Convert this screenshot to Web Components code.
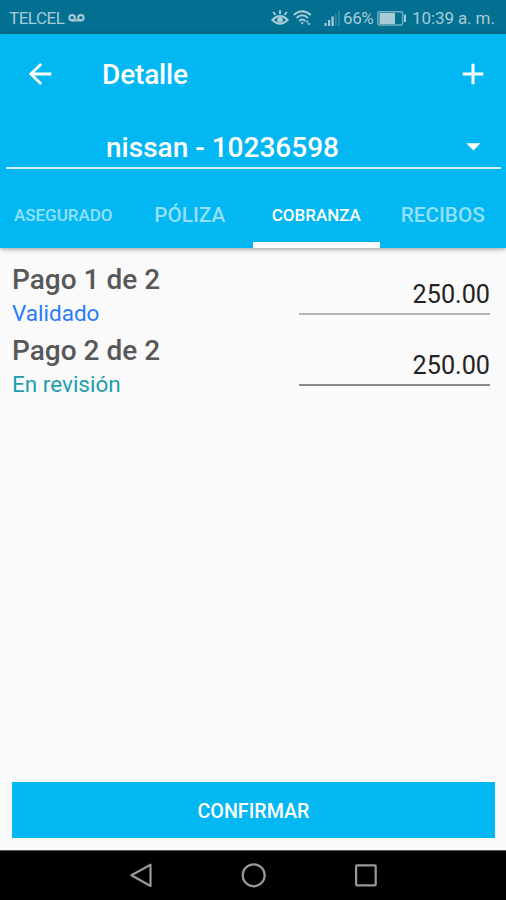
<!DOCTYPE html>
<html lang="es">
<head>
<meta charset="utf-8">
<meta name="viewport" content="width=device-width, initial-scale=1">
<title>Detalle</title>
<style>
  :root {
    --color-primary: #03b7f3;
    --color-primary-dark: #037092;
    --color-surface: #fafafa;
  }
  body {
    margin: 0;
    font-family: Roboto, "Liberation Sans", sans-serif;
    background-color: var(--color-surface);
  }
</style>
</head>
<body>
<detail-page></detail-page>

<script>
class BaseElement extends HTMLElement {
  constructor() {
    super();
    const template = document.createElement('template');
    template.innerHTML = this.constructor.markup;
    this.attachShadow({mode: 'open'});
    this.shadowRoot.appendChild(template.content.cloneNode(true));
  }
}

class StatusBar extends BaseElement {
  static markup = `
    <style>
      :host {
        box-sizing: border-box;
        display: flex;
        align-items: center;
        height: 34px;
        padding: 2px 10px 0 9px;
        background-color: var(--color-primary-dark);
        color: #a6cbd7;
        font-size: 17px;
        line-height: 20px;
        white-space: nowrap;
      }
      svg {
        display: block;
        flex: none;
      }
      .carrier { width: 56px; letter-spacing: -0.5px; }
      .voicemail { margin: 0 0 1px 3px; }
      .spacer { flex: 1; }
      .battery-level { width: 31px; margin: 0 3px 0 2px; letter-spacing: -0.4px; }
      .time { width: 84px; margin-left: 5px; letter-spacing: -0.1px; }
      .wifi { margin: 0 12px 0 4px; }
    </style>
    <span class="carrier">TELCEL</span>
    <svg class="voicemail" width="17" height="10" viewBox="0 0 17 10" fill="none" stroke="currentColor" stroke-width="2.1">
      <circle cx="4.1" cy="4.7" r="2.7"/><circle cx="12.9" cy="4.7" r="2.7"/><path d="M4 7.4h9"/>
    </svg>
    <span class="spacer"></span>
    <svg width="18" height="18" viewBox="0 0 18 18" fill="none" stroke="currentColor" stroke-width="2">
      <path d="M1.4 11Q9 3.2 16.6 11Q9 18.4 1.4 11ZM9 5V1.2M4.5 6L2.2 3M13.5 6l2.3-3"/>
      <circle cx="9" cy="10.8" r="2.9" fill="currentColor" stroke="none"/>
    </svg>
    <svg class="wifi" width="19" height="18" viewBox="0 0 19 18" fill="none" stroke="currentColor" stroke-width="2">
      <path d="M.8 6Q9.2-1.6 17.8 6M3.6 9Q9.2 3.6 15 9M6.3 12Q9.2 9 12.2 12"/>
      <path d="M7.5 13.3h3.4l-1.7 2.5zM12.3 13.2l2-2.2 1.6 2.2zM14 14.3h3.8l-1.9 2.2z" fill="currentColor" stroke="none"/>
    </svg>
    <svg width="17" height="17" viewBox="0 0 17 17" fill="currentColor">
      <path d="M.5 13h2.2v3H.5zM4 10h2.2v6H4zM7.5 6.5h2.2V16H7.5z"/>
      <path d="M11 3.5h1.6V16H11zM14 .5h1.8V16H14z" opacity=".28"/>
    </svg>
    <span class="battery-level">66%</span>
    <svg width="30" height="15" viewBox="0 0 30 15">
      <rect x=".8" y=".8" width="24.8" height="13.2" rx="1.5" fill="none" stroke="currentColor" stroke-width="1.4" opacity=".7"/>
      <path d="M2.5 2h15.5v11H2.5z" fill="currentColor"/>
      <path d="M27 3.5h2v7.5h-2z" fill="currentColor"/>
    </svg>
    <span class="time">10:39 a. m.</span>
  `;
}

class AppBar extends BaseElement {
  static markup = `
    <style>
      :host {
        box-sizing: border-box;
        display: flex;
        align-items: center;
        height: 79px;
        padding: 0 21px 0 28px;
        color: #fff;
      }
      .title {
        flex: 1;
        margin: 3px 0 0 50px;
        font-size: 28px;
        font-weight: 500;
        line-height: 34px;
        letter-spacing: -0.15px;
      }
      svg { display: block; }
    </style>
    <svg width="24" height="24" viewBox="0 0 24 24" fill="none" stroke="currentColor" stroke-width="2.8">
      <path d="M23.3 12H3M13.2 2L2.8 12l10.4 10"/>
    </svg>
    <span class="title"><slot></slot></span>
    <svg width="24" height="24" viewBox="0 0 24 24" fill="none" stroke="currentColor" stroke-width="3">
      <path d="M12 1.7v20.6M1.7 12h20.6"/>
    </svg>
  `;
}

class PolicySelect extends BaseElement {
  static markup = `
    <style>
      :host {
        box-sizing: border-box;
        display: flex;
        align-items: center;
        height: 43px;
        margin: 13px 5px 0 6px;
        padding: 1px 20px 0 100px;
        border-bottom: 2px solid #d3f2fd;
        color: #fff;
        font-size: 28px;
        font-weight: 500;
        line-height: 34px;
      }
      .value { flex: 1; margin-top: 1px; white-space: nowrap; }
      svg { display: block; }
    </style>
    <span class="value"><slot></slot></span>
    <svg width="15" height="8" viewBox="0 0 15 8" fill="currentColor"><path d="M.3.3h14.2L7.4 7.6z"/></svg>
  `;
}

class TabItem extends BaseElement {
  static markup = `
    <style>
      :host {
        box-sizing: border-box;
        display: flex;
        flex: 1;
        align-items: center;
        justify-content: center;
        padding-top: 18px;
        border-bottom: 6px solid transparent;
        color: #93e0fb;
        font-size: 20.7px;
        font-weight: 500;
        white-space: nowrap;
      }
      :host([small]) { font-size: 17px; }
      :host([selected]) {
        border-color: #fff;
        color: #fff;
      }
    </style>
    <slot></slot>
  `;
}

class TabBar extends BaseElement {
  static markup = `
    <style>
      :host {
        display: flex;
        height: 79px;
      }
    </style>
    <slot></slot>
  `;
}

class PaymentRow extends BaseElement {
  static markup = `
    <style>
      :host {
        display: flex;
        justify-content: space-between;
        height: 71.3px;
      }
      .name {
        color: #585858;
        font-size: 28px;
        font-weight: 500;
        line-height: 36px;
      }
      .status {
        color: var(--status-color);
        font-size: 22.5px;
        line-height: 30px;
      }
      .amount {
        box-sizing: border-box;
        width: 191px;
        height: 53px;
        padding-top: 17px;
        border-bottom: 2px solid var(--line-color, #8a8a8a);
        color: #222;
        font-size: 25.2px;
        line-height: 32px;
        text-align: right;
      }
    </style>
    <div>
      <div class="name"><slot></slot></div>
      <div class="status"><slot name="status"></slot></div>
    </div>
    <div class="amount"><slot name="amount"></slot></div>
  `;
}

class ActionButton extends BaseElement {
  static markup = `
    <style>
      :host { display: block; }
      button {
        display: block;
        width: 100%;
        height: 56px;
        padding: 3px 0 0;
        border: none;
        background-color: var(--color-primary);
        color: #fff;
        font: 500 19.7px Roboto, "Liberation Sans", sans-serif;
      }
    </style>
    <button><slot></slot></button>
  `;
}

class NavigationBar extends BaseElement {
  static markup = `
    <style>
      :host {
        box-sizing: border-box;
        display: flex;
        justify-content: center;
        align-items: center;
        gap: 86px;
        height: 50px;
        padding-left: 2px;
        border-top: 1px solid #555;
        background-color: #000;
        color: #999;
      }
      svg { display: block; }
    </style>
    <svg width="26" height="26" viewBox="0 0 26 26" fill="none" stroke="currentColor" stroke-width="2.2" stroke-linejoin="round"><path d="M21.5 1.7v21.3L2.4 12.3z"/></svg>
    <svg width="26" height="26" viewBox="0 0 26 26" fill="none" stroke="currentColor" stroke-width="2.2"><circle cx="12.7" cy="12.3" r="11"/></svg>
    <svg width="26" height="26" viewBox="0 0 26 26" fill="none" stroke="currentColor" stroke-width="2.2"><rect x="3.1" y="2.4" width="19.6" height="20" rx="1"/></svg>
  `;
}

class DetailPage extends BaseElement {
  static markup = `
    <style>
      :host {
        display: flex;
        flex-direction: column;
        height: 900px;
      }
      header {
        height: 214px;
        background-color: var(--color-primary);
        box-shadow: 0 1px 5px rgba(0, 0, 0, 0.4);
      }
      main {
        display: flex;
        flex: 1;
        flex-direction: column;
        padding: 14px 16px 0 12px;
      }
      footer { padding: 0 11px 12px 12px; }
    </style>
    <status-bar></status-bar>
    <header>
      <app-bar>Detalle</app-bar>
      <policy-select>nissan - 10236598</policy-select>
      <tab-bar>
        <tab-item small>ASEGURADO</tab-item>
        <tab-item>PÓLIZA</tab-item>
        <tab-item small selected>COBRANZA</tab-item>
        <tab-item>RECIBOS</tab-item>
      </tab-bar>
    </header>
    <main>
      <payment-row style="--status-color: #2b7bfa; --line-color: #b5b5b5">
        Pago 1 de 2
        <span slot="status">Validado</span>
        <span slot="amount">250.00</span>
      </payment-row>
      <payment-row style="--status-color: #209eae">
        Pago 2 de 2
        <span slot="status">En revisión</span>
        <span slot="amount">250.00</span>
      </payment-row>
    </main>
    <footer><action-button>CONFIRMAR</action-button></footer>
    <navigation-bar></navigation-bar>
  `;
}

customElements.define('status-bar', StatusBar);
customElements.define('app-bar', AppBar);
customElements.define('policy-select', PolicySelect);
customElements.define('tab-item', TabItem);
customElements.define('tab-bar', TabBar);
customElements.define('payment-row', PaymentRow);
customElements.define('action-button', ActionButton);
customElements.define('navigation-bar', NavigationBar);
customElements.define('detail-page', DetailPage);
</script>
</body>
</html>
